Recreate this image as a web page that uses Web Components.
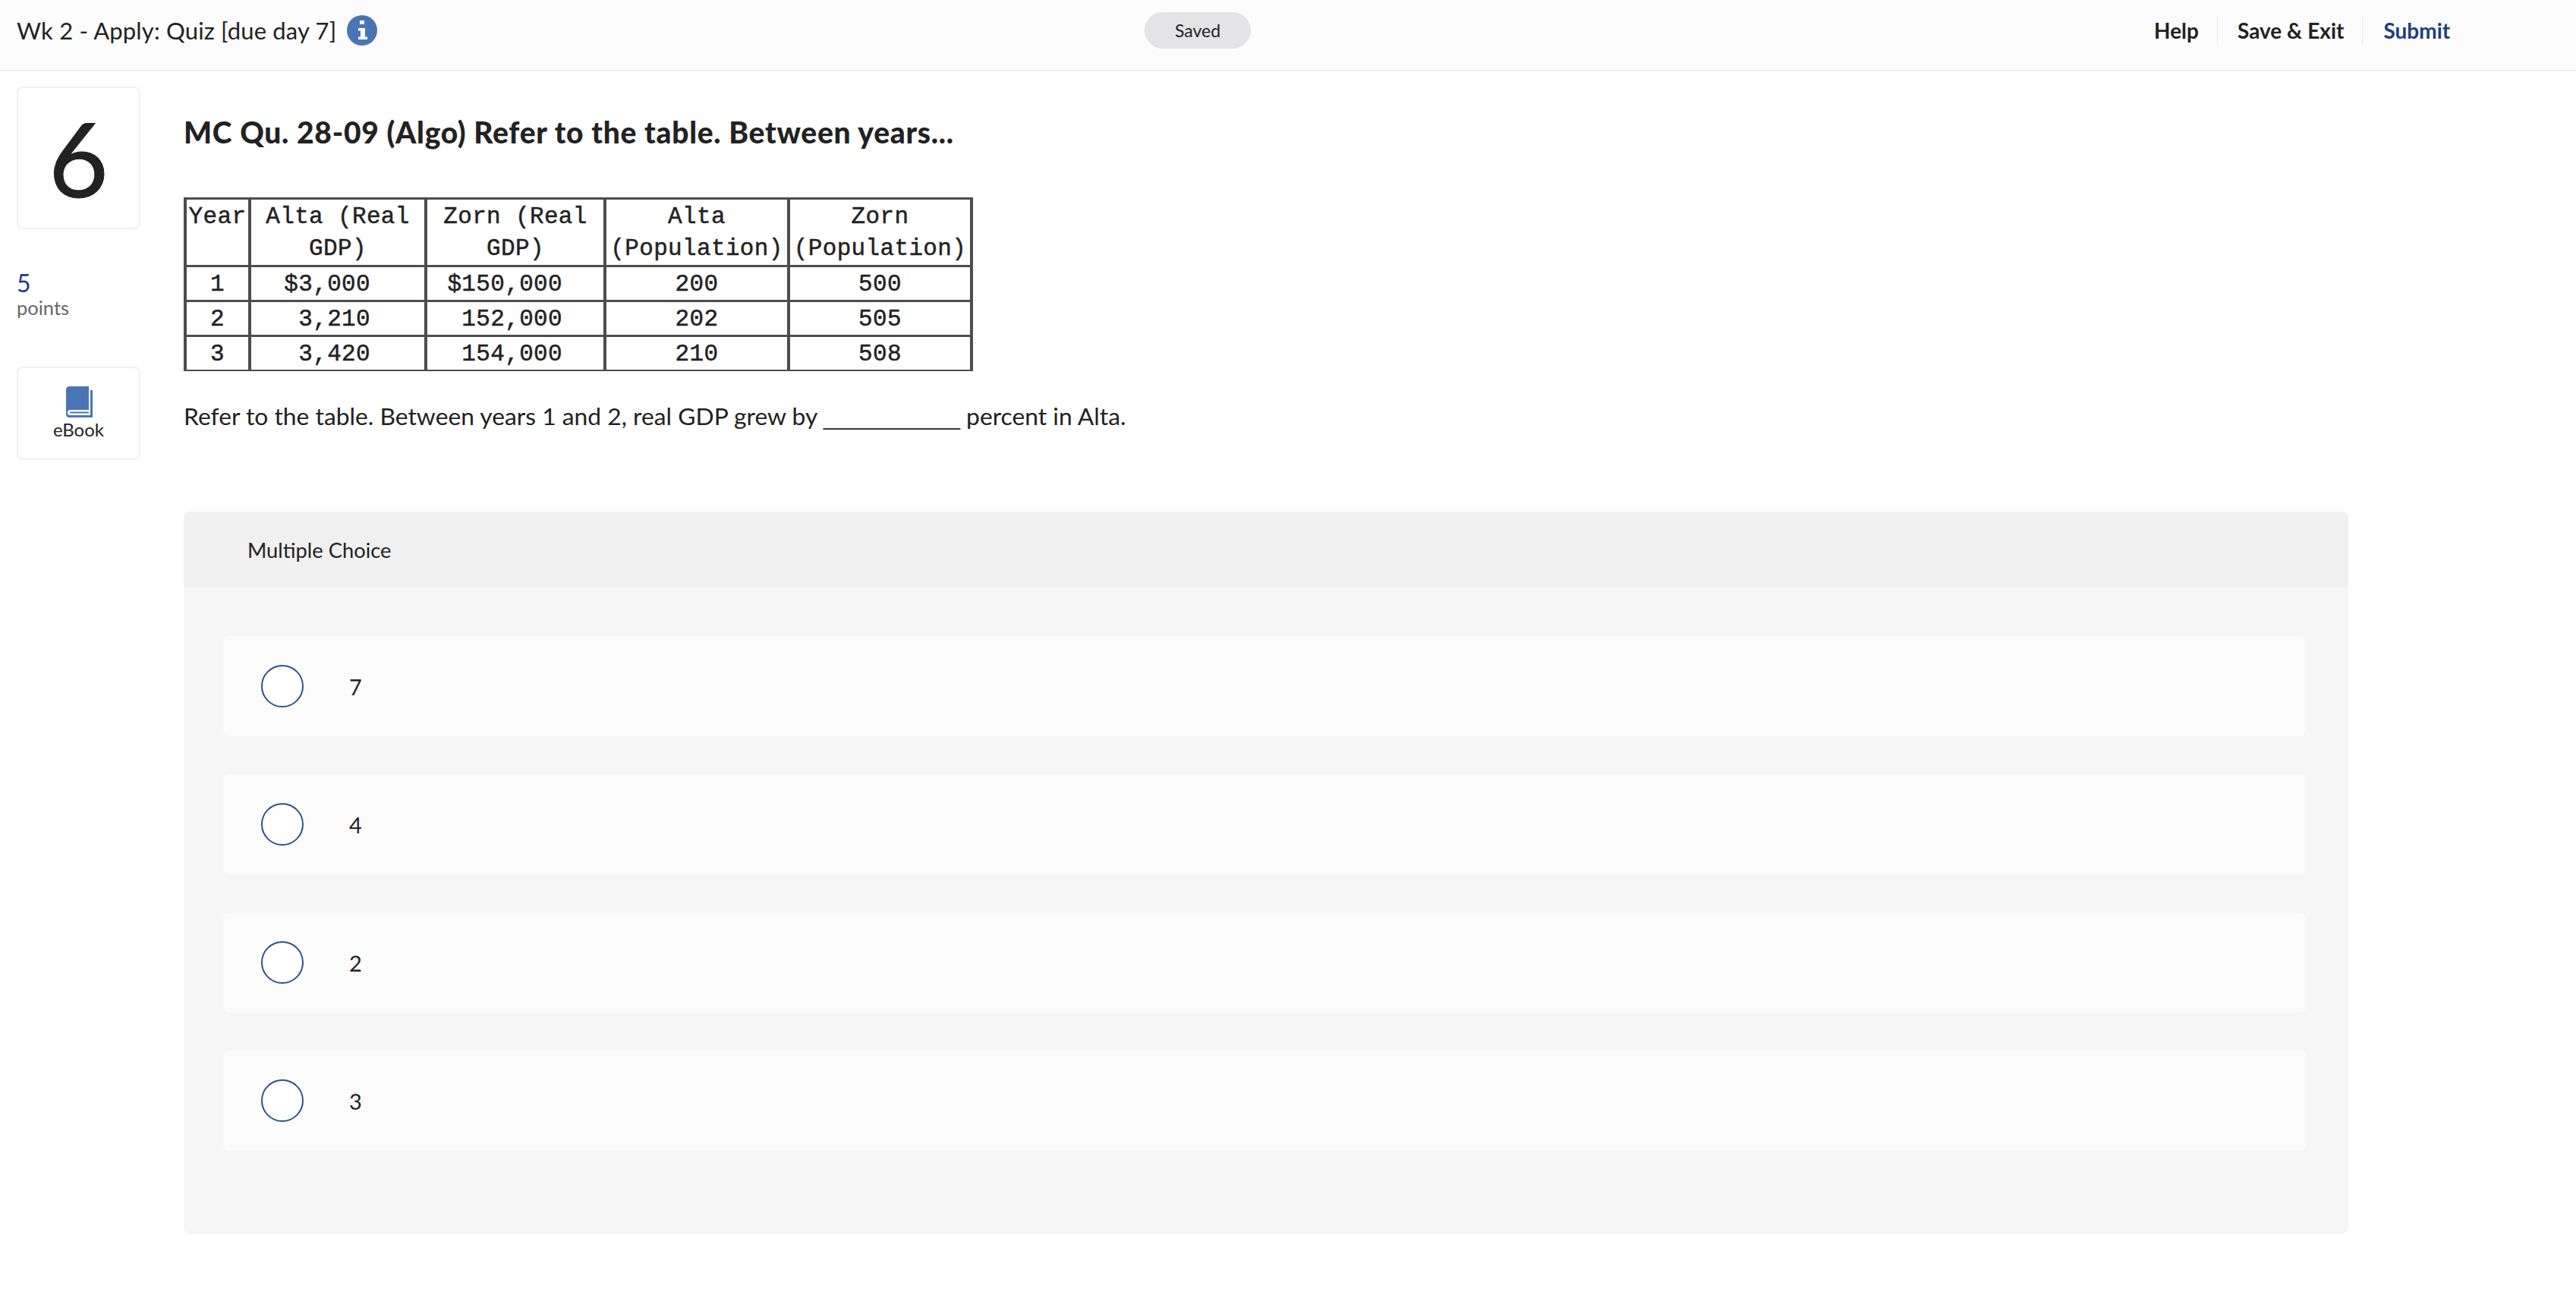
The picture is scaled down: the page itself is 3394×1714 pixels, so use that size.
<!DOCTYPE html>
<html>
<head>
<meta charset="utf-8">
<title>Quiz</title>
<style>
  html, body { margin: 0; padding: 0; background: #fff; }
  body { font-family: Lato, "Liberation Sans", sans-serif; color: #222; width: 3394px; height: 1714px; overflow: hidden; }
</style>
</head>
<body>
<template id="quiz-header-tpl">
  <style>
    :host { display: block; height: 92px; background: #fcfcfc; border-bottom: 2px solid #f0f0f0; position: relative; }
    .bar { display: grid; grid-template-columns: 1486px 162px 1fr; height: 80px; align-items: center; }
    .title { display: flex; align-items: center; padding-left: 22px; font-size: 31px; letter-spacing: .17px; }
    .title svg { margin-left: 14px; }
    .saved { width: 140px; height: 48px; border-radius: 24px; background: #e4e3e5; font-size: 23px; display: flex; align-items: center; justify-content: center; margin-left: 22px; }
    .links { display: flex; align-items: center; justify-content: flex-start; padding-left: 1190px; font-size: 28px; font-weight: 700; }
    .links span { display: flex; align-items: center; height: 40px; padding: 0 24px 0 26px; border-right: 1px solid #ececec; }
    .links span:first-child { padding-left: 0; }
    .links span:last-child { border: 0; color: #1c3f7c; padding-left: 27px; }
  </style>
  <div class="bar">
    <div class="title"><slot></slot>
      <svg width="40" height="40" viewBox="0 0 40 40"><circle cx="20" cy="20" r="20" fill="#4a75b5"/><rect x="17" y="7" width="6" height="5" fill="#fff"/><path d="M15 17h9v11.500h3v3.500h-12v-3.500h3v-8h-3z" fill="#fff"/></svg>
    </div>
    <div class="saved">Saved</div>
    <div class="links"><span>Help</span><span>Save &amp; Exit</span><span>Submit</span></div>
  </div>
</template>

<template id="side-rail-tpl">
  <style>
    :host { display: flex; flex-direction: column; width: 163px; flex: none; }
    .card { box-sizing: border-box; width: 163px; border: 2px solid #f0f0f0; border-radius: 8px; background: #fff; display: flex; flex-direction: column; align-items: center; }
    .num { height: 188px; justify-content: center; font-size: 136px; line-height: 1; color: #222; -webkit-text-stroke: 1px #222; }
    .pts { margin-top: 53px; font-size: 32px; line-height: 36px; color: #1c3f7c; }
    .lbl { font-size: 25.500px; line-height: 28px; color: #666; }
    .book { margin-top: 64px; height: 123px; padding-top: 24px; font-size: 24px; }
    .book svg { display: block; margin-bottom: 1px; }
  </style>
  <div class="card num"><slot name="number"></slot></div>
  <div class="pts"><slot name="points"></slot></div>
  <div class="lbl">points</div>
  <div class="card book">
    <svg width="36" height="41" viewBox="0 0 36 41">
      <path d="M5 0H31V41H5C2.500 41 1 39 1 36V4C1 2 3 0 5 0Z" fill="#4a75b5"/>
      <path d="M33 5h3v36H28v-3h5z" fill="#4a75b5"/>
      <path d="M6.500 31H33v7H6.500a3.500 3.500 0 0 1 0-7z" fill="#fff"/>
      <path d="M7 33.500H31v2H7a1 1 0 0 1 0-2z" fill="#4a75b5"/>
    </svg>
    <span>eBook</span>
  </div>
</template>

<template id="data-table-tpl">
  <style>
    :host { display: block; }
    table { border-collapse: separate; border-spacing: 0; border: solid #4d4d4d; border-width: 1px 2px; width: 1040px; box-sizing: border-box; table-layout: fixed;
      font-family: "Liberation Mono", monospace; font-size: 31px; letter-spacing: .35px; line-height: 41px; color: #222; -webkit-text-stroke: .45px #222; }
    td { border: solid #4d4d4d; border-width: 2px 2px 1px; padding: 2px 0 0; text-align: center; white-space: pre-line; vertical-align: top; }
    tr:first-child td { line-height: 42px; }
    .a { width: 81px; } .b { width: 228px; } .c { width: 232px; } .d { width: 238px; }
    td.amt { text-align: right; }
    td.b.amt { padding-right: 71px; }
    td.c.amt { padding-right: 54px; }
  </style>
  <table id="t"></table>
</template>

<template id="choice-row-tpl">
  <style>
    :host { display: flex; align-items: center; height: 132px; background: #fbfbfb; border-radius: 8px; padding-left: 50px; font-size: 29px; }
    i { box-sizing: border-box; width: 56px; height: 56px; border-radius: 50%; border: 2px solid #2b5389; background: #fff; margin-right: 60px; flex: none; }
  </style>
  <i></i><slot></slot>
</template>

<template id="choice-panel-tpl">
  <style>
    :host { display: block; width: 2852px; height: 952px; background: #f6f6f6; border-radius: 8px; overflow: hidden; }
    .head { height: 100px; background: #f0f0f0; display: flex; align-items: center; padding-left: 84px; font-size: 27.300px; }
    .list { display: flex; flex-direction: column; gap: 50px; padding: 64px 56px 0 52px; }
  </style>
  <div class="head">Multiple Choice</div>
  <div class="list"><slot></slot></div>
</template>

<quiz-header>Wk 2 - Apply: Quiz [due day 7]</quiz-header>
<quiz-main></quiz-main>

<script>
  function shadowFrom(el, id) {
    el.attachShadow({ mode: 'open' });
    el.shadowRoot.appendChild(document.getElementById(id).content.cloneNode(true));
  }

  class QuizHeader extends HTMLElement {
    constructor() { super(); shadowFrom(this, 'quiz-header-tpl'); }
  }

  class SideRail extends HTMLElement {
    constructor() { super(); shadowFrom(this, 'side-rail-tpl'); }
  }

  class DataTable extends HTMLElement {
    constructor() { super(); shadowFrom(this, 'data-table-tpl'); }
    connectedCallback() {
      const rows = [
        ['Year', 'Alta (Real\nGDP)', 'Zorn (Real\nGDP)', 'Alta\n(Population)', 'Zorn\n(Population)'],
        ['1', '$3,000', '$150,000', '200', '500'],
        ['2', '3,210', '152,000', '202', '505'],
        ['3', '3,420', '154,000', '210', '508']
      ];
      const widths = ['a', 'b', 'c', 'd', ''];
      const table = this.shadowRoot.getElementById('t');
      rows.forEach((row, i) => {
        const tr = table.insertRow();
        row.forEach((text, j) => {
          const td = tr.insertCell();
          td.textContent = text;
          if (widths[j]) td.classList.add(widths[j]);
          // money columns line up on the right, not centred
          if (i && (j === 1 || j === 2)) td.classList.add('amt');
        });
      });
    }
  }

  class ChoiceRow extends HTMLElement {
    constructor() { super(); shadowFrom(this, 'choice-row-tpl'); }
  }

  class ChoicePanel extends HTMLElement {
    constructor() { super(); shadowFrom(this, 'choice-panel-tpl'); }
  }

  class QuizMain extends HTMLElement {
    constructor() {
      super();
      this.attachShadow({ mode: 'open' });
      this.shadowRoot.innerHTML = `
        <style>
          :host { display: flex; padding: 20px 0 0 22px; gap: 57px; }
          .body { display: flex; flex-direction: column; }
          h1 { margin: 36px 0 0; font-size: 39px; line-height: 48px; font-weight: 900; color: #222; white-space: nowrap; letter-spacing: .7px; }
          data-table { margin-top: 62px; }
          p { margin: 38px 0 0; font-size: 31.800px; line-height: 42px; color: #222; white-space: nowrap; }
          p span { font-family: "Liberation Sans", sans-serif; font-size: 27px; }
          choice-panel { margin-top: 102px; }
        </style>
        <side-rail><span slot="number">6</span><span slot="points">5</span></side-rail>
        <div class="body">
          <h1>MC Qu. 28-09 (Algo) Refer to the table. Between years...</h1>
          <data-table></data-table>
          <p>Refer to the table. Between years 1 and 2, real GDP grew by <span>____________</span> percent in Alta.</p>
          <choice-panel>
            <choice-row>7</choice-row>
            <choice-row>4</choice-row>
            <choice-row>2</choice-row>
            <choice-row>3</choice-row>
          </choice-panel>
        </div>`;
    }
  }

  customElements.define('quiz-header', QuizHeader);
  customElements.define('side-rail', SideRail);
  customElements.define('data-table', DataTable);
  customElements.define('choice-row', ChoiceRow);
  customElements.define('choice-panel', ChoicePanel);
  customElements.define('quiz-main', QuizMain);
</script>
</body>
</html>
